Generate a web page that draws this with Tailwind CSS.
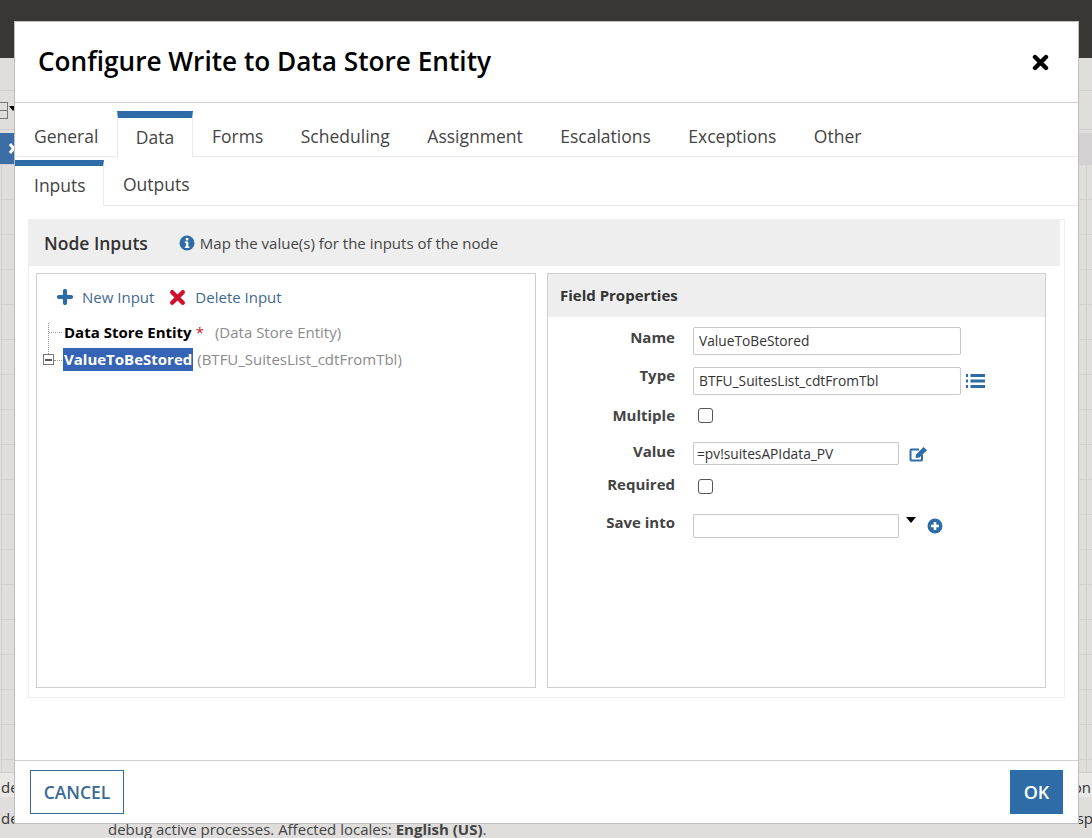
<!DOCTYPE html>
<html lang="en">
<head>
  <meta charset="UTF-8" />
  <title>Configure Write to Data Store Entity</title>
  <script src="https://cdn.jsdelivr.net/npm/@tailwindcss/browser@4"></script>
</head>
<body class="w-[1092px] h-[838px] overflow-hidden relative bg-[#dfdedd] font-['Open_Sans',sans-serif] text-[#333]">

<!-- Page behind the dialog -->
<div class="h-[58px] bg-[#383736]"></div>
<div class="h-[33px] border-b border-[#cfcecd]"></div>
<div class="h-[39px] border-b border-[#cfcecd] flex items-center">
  <div class="ml-[-4px] flex items-center gap-[1px] mt-[1px]">
    <span class="w-[12px] h-[17px] border border-[#777] flex flex-col"><span class="mt-[7px] border-t border-[#777]"></span></span>
    <span class="w-0 h-0 border-x-[4px] border-t-[5px] border-x-transparent border-t-black mt-[-4px]"></span>
  </div>
</div>
<div class="h-[3px]"></div>
<div class="h-[31px] flex justify-between">
  <div class="w-[14px] bg-[#3a6ea5] overflow-hidden">
    <svg class="w-[14px] h-[31px]" viewBox="0 0 14 31"><path d="M10 11L17 20M17 11L10 20" stroke="#fff" stroke-width="3"/></svg>
  </div>
  <div class="w-[14px] bg-[#d3d1d1]"></div>
</div>
<div class="h-[609px] bg-[length:35px_35px] bg-[position:1px_0] bg-[linear-gradient(#d2d1d0_1px,transparent_1px),linear-gradient(90deg,#d2d1d0_1px,transparent_1px)] border-b border-[#cfcecd]"></div>
<div class="h-[24px] bg-[#e8e7e6]"></div>
<div class="absolute left-[1px] top-[776px] text-[15px]">de</div>
<div class="absolute left-[1px] top-[807px] text-[15px]">de</div>
<div class="absolute right-[1px] top-[776px] text-[15px]">on</div>
<div class="absolute right-[-1px] top-[807px] text-[15px]">sp</div>
<div class="absolute left-[108px] top-[818px] text-[15px] text-[#444]">debug active processes. Affected locales: <b>English (US)</b>.</div>

<!-- Dialog -->
<div class="absolute left-[14px] top-[21px] w-[1065px] h-[803px] bg-white border border-[#bdbdbd] flex flex-col">

  <div class="h-[81px] flex items-center justify-between border-b border-[#cfcfcf] pl-[23px] pr-[29px] shrink-0">
    <h1 class="text-[26.2px] font-semibold text-black mt-[-1px]">Configure Write to Data Store Entity</h1>
    <svg class="w-[17px] h-[17px] mt-[1px]" viewBox="0 0 17 17"><path d="M3 3L14 14M14 3L3 14" stroke="#000" stroke-width="4.4" stroke-linecap="round"/></svg>
  </div>

  <!-- Tabs -->
  <div class="h-[54px] flex items-end border-b border-[#eaeaea] text-[17.5px] text-[#444] shrink-0">
    <div class="w-[102px] h-[46px] pl-[19px] pt-[13px]">General</div>
    <div class="w-[76px] h-[46px] mb-[-1px] bg-white border-t-[7px] border-t-[#2e6ca8] border-x border-x-[#eaeaea] text-center pt-[6px]">Data</div>
    <div class="flex h-[46px] pt-[13px] gap-[37.5px] pl-[19px]">
      <span>Forms</span><span>Scheduling</span><span>Assignment</span><span>Escalations</span><span>Exceptions</span><span>Other</span>
    </div>
  </div>
  <div class="h-[49px] flex items-end border-b border-[#eaeaea] text-[17.5px] text-[#444] shrink-0">
    <div class="w-[89px] h-[46px] mb-[-1px] bg-white border-t-[6px] border-t-[#2e6ca8] border-r border-r-[#eaeaea] pl-[19px] pt-[6px]">Inputs</div>
    <div class="pl-[19px] h-[41px] pt-[7px]">Outputs</div>
  </div>

  <!-- Node inputs section -->
  <div class="mx-[13px] mt-[13px] w-[1037px] h-[479px] border border-[#eeeeee] flex flex-col shrink-0">
    <div class="h-[46px] w-[1031px] bg-[#eeeeee] flex items-center pl-[15px] shrink-0">
      <span class="text-[17.5px] font-semibold text-[#333]">Node Inputs</span>
      <svg class="w-[16px] h-[16px] ml-[31px]" viewBox="0 0 16 16"><circle cx="8" cy="8" r="7.5" fill="#2e6ca8"/><rect x="6.8" y="3" width="2.6" height="2.4" fill="#fff"/><path d="M5.8 6.6H9.3V11.6H10.4V13H5.8V11.6H6.9V8H5.8Z" fill="#fff"/></svg>
      <span class="text-[15px] text-[#444] ml-[5px]">Map the value(s) for the inputs of the node</span>
    </div>

    <div class="flex flex-1 pt-[7px] pl-[7px] gap-[11px]">
      <!-- Left tree -->
      <div class="w-[500px] h-[415px] border border-[#cfcfcf] pl-[8px]">
        <div class="flex items-center h-[20px] mt-[13px] ml-[12px] text-[15px] text-[#41698f]">
          <svg class="w-[16px] h-[16px]" viewBox="0 0 16 16"><path d="M8 2V14M2 8H14" stroke="#2e6ca8" stroke-width="4.2" stroke-linecap="round"/></svg>
          <span class="ml-[9px]">New Input</span>
          <svg class="w-[17px] h-[17px] ml-[15px]" viewBox="0 0 17 17"><path d="M3.2 3.2L13.8 13.8M13.8 3.2L3.2 13.8" stroke="#d0112b" stroke-width="4.4" stroke-linecap="round"/></svg>
          <span class="ml-[9px]">Delete Input</span>
        </div>
        <div class="relative mt-[15px]">
          <div class="absolute left-[3px] top-[1px] h-[33px] border-l border-dotted border-[#999]"></div>
          <div class="flex items-center h-[20px] pl-[19px] relative">
            <span class="absolute left-[4px] w-[13px] border-t border-dotted border-[#999]"></span>
            <b class="text-[15px] text-black">Data Store Entity</b>
            <span class="text-[#c8202f] text-[15px] ml-[4px]">*</span>
            <span class="text-[15px] text-[#8b8b8b] ml-[11px]">(Data Store Entity)</span>
          </div>
          <div class="flex items-center h-[23px] mt-[6px] pl-[18px] relative">
            <span class="absolute left-[-2px] top-[6px] w-[11px] h-[11px] border border-[#777] bg-white flex items-center justify-center"><span class="w-[7px] h-[2px] bg-[#555]"></span></span>
            <span class="absolute left-[9px] top-[12px] w-[8px] border-t border-dotted border-[#999]"></span>
            <b class="bg-[#3563b5] text-white text-[15px] h-[23px] leading-[23px] px-[1px]">ValueToBeStored</b>
            <span class="text-[15px] text-[#8b8b8b] ml-[4px]">(BTFU_SuitesList_cdtFromTbl)</span>
          </div>
        </div>
      </div>

      <!-- Field properties -->
      <div class="w-[499px] h-[415px] border border-[#cfcfcf]">
        <div class="h-[43px] bg-[#eeeeee] pl-[12px] flex items-center text-[15px] font-bold text-[#333]">Field Properties</div>
        <div class="grid grid-cols-[127px_1fr] gap-x-[18px] mt-[10px] text-[15px]">
          <div class="text-right font-bold text-[#444] leading-[21px] h-[40px]">Name</div>
          <div><input value="ValueToBeStored" class="w-[268px] h-[28px] border border-[#c8c8c8] rounded-[2px] px-[5px] text-[13.75px] text-[#333] pb-[1px]" /></div>

          <div class="text-right font-bold text-[#444] leading-[21px] h-[40px] mt-[-2px]">Type</div>
          <div class="flex items-start gap-[4px]"><input value="BTFU_SuitesList_cdtFromTbl" class="w-[268px] h-[28px] border border-[#c8c8c8] rounded-[2px] px-[5px] text-[13.75px] text-[#333] pb-[1px]" />
            <svg class="w-[20px] h-[16px] mt-[6px]" viewBox="0 0 20 16"><path d="M1 2.5H3M1 8H3M1 13.5H3M5.5 2.5H20M5.5 8H20M5.5 13.5H20" stroke="#2e6ca8" stroke-width="3"/></svg>
          </div>

          <div class="text-right font-bold text-[#444] leading-[21px] h-[37px]">Multiple</div>
          <div><div class="w-[15px] h-[15px] ml-[5px] mt-[3px] border border-[#555] rounded-[3px]"></div></div>

          <div class="text-right font-bold text-[#444] leading-[21px] h-[35px] mt-[-1px]">Value</div>
          <div class="flex items-start gap-[10px]"><input value="=pv!suitesAPIdata_PV" class="w-[206px] h-[23px] border border-[#c8c8c8] rounded-[2px] px-[3px] text-[13.75px] text-[#333]" />
            <svg class="w-[19px] h-[16px] mt-[4px]" viewBox="0 0 19 16"><path d="M13 9V13.5Q13 14.5 12 14.5H2.5Q1.5 14.5 1.5 13.5V4.5Q1.5 3.5 2.5 3.5H10" fill="none" stroke="#2e6ca8" stroke-width="2"/><path d="M7 8.5L14.5 1L18 4.2L10.5 11.5L6.5 12Z" fill="#2e6ca8"/></svg>
          </div>

          <div class="text-right font-bold text-[#444] leading-[21px] h-[40px] mt-[-2px]">Required</div>
          <div><div class="w-[15px] h-[15px] ml-[5px] mt-[3px] border border-[#555] rounded-[3px]"></div></div>

          <div class="text-right font-bold text-[#444] leading-[21px] mt-[-2px]">Save into</div>
          <div class="flex items-start"><input class="w-[206px] h-[24px] border border-[#c8c8c8] rounded-[2px]" />
            <span class="w-0 h-0 ml-[7px] mt-[3px] border-x-[5px] border-t-[6px] border-x-transparent border-t-black"></span>
            <svg class="w-[16px] h-[16px] ml-[11px] mt-[4px]" viewBox="0 0 16 16"><circle cx="8" cy="8" r="7.5" fill="#2e6ca8"/><path d="M8 4V12M4 8H12" stroke="#fff" stroke-width="2.6"/></svg>
          </div>
        </div>
      </div>
    </div>
  </div>

  <!-- Footer -->
  <div class="mt-auto h-[63px] border-t border-[#cfcfcf] flex justify-between items-start pl-[15px] pr-[15px] pt-[9px]">
    <button class="w-[94px] h-[44px] border border-[#3a6a94] text-[#3a6a94] text-[17.5px] font-semibold">CANCEL</button>
    <button class="w-[53px] h-[44px] bg-[#2e6ca8] text-white text-[18px] font-semibold">OK</button>
  </div>
</div>

</body>
</html>
